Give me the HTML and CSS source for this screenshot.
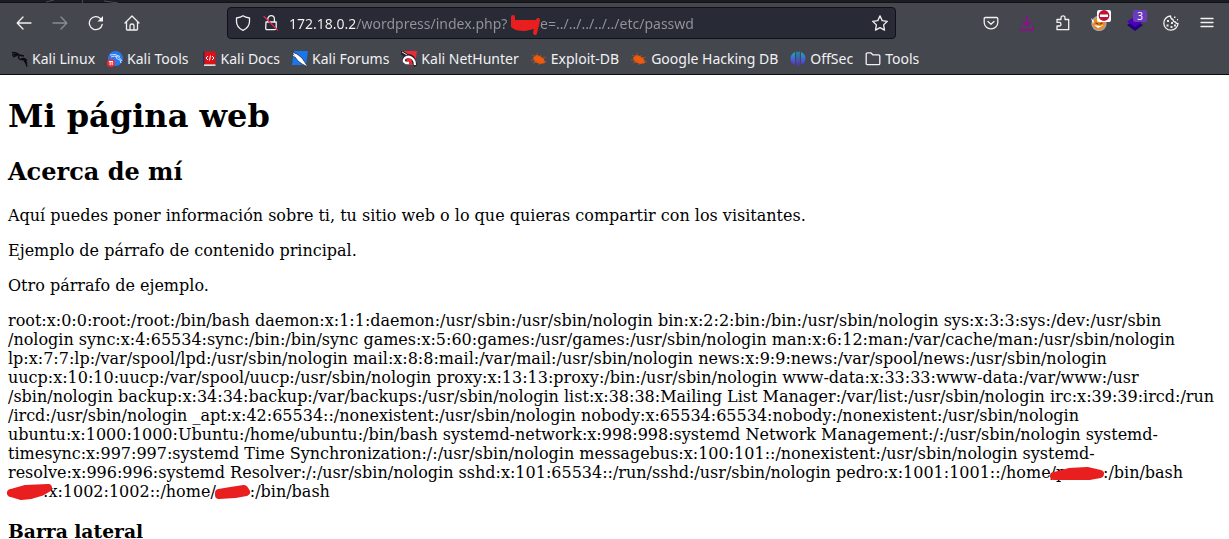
FILE: index.html
```html
<!DOCTYPE html>
<html lang="es">
<head>
<meta charset="utf-8">
<title>Mi página web</title>
<link rel="stylesheet" href="styles.css">
</head>
<body>
<header class="browser">
  <div class="tab-edge"><svg width="260" height="3" viewBox="0 0 260 3"><path d="M46 2l8-2M82.500 3V0M104 1l14 2" stroke="#4b4c53" fill="none"/></svg></div>
  <div class="toolbar">
    <nav class="buttons">
      <button class="tool" aria-label="Atrás"><svg viewBox="0 0 16 16"><path d="M15 8H1.500M7 2L1.200 8L7 14"/></svg></button>
      <button class="tool dim" aria-label="Adelante"><svg viewBox="0 0 16 16"><path d="M1 8h13.500M9 2l5.800 6L9 14"/></svg></button>
      <button class="tool" aria-label="Recargar"><svg viewBox="0 0 16 16"><path d="M14.200 9.500A6.500 6.500 0 1 1 12.500 3.600L14 5"/><path d="M15 1v5.500H9.500z" fill="#f1f1f2" stroke="none"/></svg></button>
      <button class="tool" aria-label="Inicio"><svg viewBox="0 0 16 16"><path d="M1 8l7-7 7 7M2.500 7v7.200q0 .8.800.8h9.400q.8 0 .8-.8V7M6 15v-4.500q0-1.500 2-1.500t2 1.500V15"/></svg></button>
    </nav>
    <div class="urlbar">
      <svg class="icon line" viewBox="0 0 16 16"><path d="M8 .8C6.500 2 4 2.700 1.500 3v3.500C1.500 11 4 13.500 8 15.300c4-1.800 6.500-4.300 6.500-8.800V3C12 2.700 9.500 2 8 .8z"/></svg>
      <svg class="icon line lock" viewBox="0 0 16 16"><path d="M4.800 7V4a3.300 3.300 0 0 1 6.600 0v3M3 7h10.200v6.200q0 1.500-1.500 1.500H4.200q-1.500 0-1.500-1.500z"/><path d="M1 1.500l13.500 13.500" stroke="#e22850"/></svg>
      <div class="address">
        <input class="url" aria-label="Dirección" value="172.18.0.2/wordpress/index.php?         e=../../../../../etc/passwd">
        <svg class="mark mark-url" viewBox="0 0 32 22"><path d="M3 3v9q3 3 12 3l12-3M5 8h20M5 12h22M28 6l-3 13M14 11h12" /></svg>
      </div>
      <button class="star" aria-label="Marcador"><svg class="icon line" viewBox="0 0 16 16"><path d="M8 .9l2.200 4.700 5.100.7-3.700 3.600.9 5.200L8 12.600l-4.500 2.500.9-5.200L.7 6.300l5.100-.7z"/></svg></button>
    </div>
    <nav class="buttons">
      <button class="tool" aria-label="Pocket"><svg viewBox="0 0 16 16"><path d="M2.500 2.500h11q1.300 0 1.300 1.300V7.500a6.800 6.300 0 0 1-13.600 0V3.800q0-1.300 1.300-1.300zM5 6.500l3 2.700 3-2.700"/></svg></button>
      <button class="tool download" aria-label="Descargas"><svg viewBox="0 0 16 16"><path d="M8 1v9.500M4 6.700l4 4 4-4M1.500 12v2q0 1 1 1h11q1 0 1-1v-2"/></svg></button>
      <button class="tool" aria-label="Extensiones"><svg viewBox="0 0 16 16"><path d="M2 6V4.500H6V2.800a2 2 0 0 1 4 0V4.500h3.700V14.700H2V11h2.200a1.800 1.800 0 0 0 0-3.600H2z"/></svg></button>
      <button class="tool" aria-label="FoxyProxy"><svg viewBox="0 0 16 16"><circle cx="8" cy="8.500" r="7" fill="#e88b28" stroke="#a3a9b0"/><path d="M0 3l3 3-1 3zM3 10l4 3 6-3-4 1z" fill="#fff" stroke="none"/><path d="M5 8l2 1M9 9l2-1" stroke="#764010"/></svg><span class="badge stop"><svg viewBox="0 0 14 12"><circle cx="7" cy="5.500" r="5.400" fill="#be123a" stroke="none"/><path d="M3 4.500h8v2.500H3z" fill="#fff" stroke="none"/></svg></span></button>
      <button class="tool" aria-label="Wappalyzer"><svg viewBox="0 0 16 16"><path d="M0 10l8-5 8 5-8 6z" fill="#210080" stroke="none"/><path d="M0 6.500l8-5 8 5-8 5.500z" fill="#4c00b8" stroke="none"/></svg><span class="badge count">3</span></button>
      <button class="tool" aria-label="Cookies"><svg viewBox="0 0 16 16"><path d="M7.500 1A7.100 7.100 0 1 0 15 8.500q-2 .5-2.500-1.500-2.500 0-2.500-2.500Q7.500 4 7.500 1z"/><path d="M11 1.500h1.500v1.500H11zM14 4h1v1.500h-1zM4 5h2v2H4zM8 7h2v2H8zM3.500 9.500h2v2h-2zM7.500 11h2v2h-2zM11 9.500h2v2h-2z" fill="#e6e6e8" stroke="none"/></svg></button>
      <button class="tool" aria-label="Menú"><svg viewBox="0 0 16 16"><path d="M2 3.500h12M2 7.500h12M2 11.500h12"/></svg></button>
    </nav>
  </div>
  <nav class="bookmarks">
    <a href="#"><svg class="icon" viewBox="0 0 16 16"><path d="M0 1.500l4 .5 3 1.500M0 4l5-.5 3 .8q-3 2.200 0 4l5 .7 2 3.500M1 6l4-1.500M7 4l5 1M9 8q3-1.500 6 1.500M12 10q2 1 3 5.500" fill="none" stroke="#0b0b0e" stroke-width="1.300"/></svg>Kali Linux</a>
    <a href="#"><svg class="icon" viewBox="0 0 16 16"><circle cx="8.500" cy="7.500" r="7.500" fill="#2777f2"/><path d="M3 4l5-.5 5 2M4 6q7-3 11 4M9 5q-1 3 4 4l1 3" fill="none" stroke="#c9e2ff"/><circle cx="4" cy="12" r="4" fill="#ee2f35"/><path d="M2 10.500h4M3.200 10.500V14M5.200 10.500V14" stroke="#fff"/></svg>Kali Tools</a>
    <a href="#"><svg class="icon" viewBox="0 0 16 16"><path d="M2 .5h2V14H2z" fill="#253064"/><path d="M3.500.5H14.500V13H3.500z" fill="#df1018"/><path d="M3 13.300h11.500v1.700H3z" fill="#e9d5d3"/><path d="M7 5L5 7l2 2M9.500 4.500l-1 5M11 5l2 2-2 2" fill="none" stroke="#fff"/></svg>Kali Docs</a>
    <a href="#"><svg class="icon" viewBox="0 0 16 16"><path d="M2 0h14l-2 14H0z" fill="#1976ed"/><path d="M0 1l5 2 5 4 2 3 4 6-6-3-4-3-3-4z" fill="#fff" stroke="#26344a" stroke-width=".8"/><path d="M1 4l5 3" stroke="#fff"/></svg>Kali Forums</a>
    <a href="#"><svg class="icon" viewBox="0 0 16 16"><path d="M1 0h15l-2 14H8z" fill="#ec2936"/><path d="M0 1l6 4M3 10q0-5 5-5 5 1 5 6l2 4" fill="none" stroke="#26232b" stroke-width="4"/><path d="M1 1l5 3" stroke="#ddd"/><path d="M8 12l-3 0q-4-2-1-5 4-3 8 1 2 2 2 6" fill="none" stroke="#fff" stroke-width="2.300"/></svg>Kali NetHunter</a>
    <a href="#"><svg class="icon" viewBox="0 0 16 16"><path d="M2 7l3-3 4 1 4 3 1 4-5 1-5-2z" fill="#f15a0a"/><path d="M1 4l4 2M6 2l1 4M10 4l-1 3M0 9h5M2 12l5-2M11 7l4-1M12 10l4 1M8 14l1-3" stroke="#c65618" stroke-width=".7"/></svg>Exploit-DB</a>
    <a href="#"><svg class="icon" viewBox="0 0 16 16"><path d="M2 7l3-3 4 1 4 3 1 4-5 1-5-2z" fill="#f15a0a"/><path d="M1 4l4 2M6 2l1 4M10 4l-1 3M0 9h5M2 12l5-2M11 7l4-1M12 10l4 1M8 14l1-3" stroke="#c65618" stroke-width=".7"/></svg>Google Hacking DB</a>
    <a href="#"><svg class="icon" viewBox="0 0 16 16"><defs><linearGradient id="offsec" x2="0" y2="1"><stop stop-color="#15aeca"/><stop offset="1" stop-color="#6525d8"/></linearGradient></defs><path d="M5 1v13Q.5 12 .5 7.500T5 1zM11 1v13q4.500-2 4.500-6.500T11 1zM6 .5h.6V12L6 14zM9.400 .5h.6V14l-.6-2zM7.300 1h1.400v14H7.300z" fill="url(#offsec)"/></svg>OffSec</a>
    <a href="#"><svg class="icon line" viewBox="0 0 16 16"><path d="M1.200 3q0-1.200 1.200-1.200h3.400l2 2h5.800q1.200 0 1.200 1.200v7.500q0 1.200-1.200 1.200H2.400q-1.200 0-1.200-1.200z"/></svg>Tools</a>
  </nav>
</header>
<main class="page">
  <h1>Mi página web</h1>
  <h2>Acerca de mí</h2>
  <p>Aquí puedes poner información sobre ti, tu sitio web o lo que quieras compartir con los visitantes.</p>
  <p>Ejemplo de párrafo de contenido principal.</p>
  <p>Otro párrafo de ejemplo.</p>
  <p class="listing">root:x:0:0:root:/root:/bin/bash daemon:x:1:1:daemon:/usr/sbin:/usr/sbin/nologin bin:x:2:2:bin:/bin:/usr/sbin/nologin sys:x:3:3:sys:/dev:/usr/sbin<br>/nologin sync:x:4:65534:sync:/bin:/bin/sync games:x:5:60:games:/usr/games:/usr/sbin/nologin man:x:6:12:man:/var/cache/man:/usr/sbin/nologin<br>lp:x:7:7:lp:/var/spool/lpd:/usr/sbin/nologin mail:x:8:8:mail:/var/mail:/usr/sbin/nologin news:x:9:9:news:/var/spool/news:/usr/sbin/nologin<br>uucp:x:10:10:uucp:/var/spool/uucp:/usr/sbin/nologin proxy:x:13:13:proxy:/bin:/usr/sbin/nologin www-data:x:33:33:www-data:/var/www:/usr<br>/sbin/nologin backup:x:34:34:backup:/var/backups:/usr/sbin/nologin list:x:38:38:Mailing List Manager:/var/list:/usr/sbin/nologin irc:x:39:39:ircd:/run<br>/ircd:/usr/sbin/nologin _apt:x:42:65534::/nonexistent:/usr/sbin/nologin nobody:x:65534:65534:nobody:/nonexistent:/usr/sbin/nologin<br>ubuntu:x:1000:1000:Ubuntu:/home/ubuntu:/bin/bash systemd-network:x:998:998:systemd Network Management:/:/usr/sbin/nologin systemd-<br>timesync:x:997:997:systemd Time Synchronization:/:/usr/sbin/nologin messagebus:x:100:101::/nonexistent:/usr/sbin/nologin systemd-<br>resolve:x:996:996:systemd Resolver:/:/usr/sbin/nologin sshd:x:101:65534::/run/sshd:/usr/sbin/nologin pedro:x:1001:1001::/home/<span class="hidden-name wide">p<svg class="mark mark-wide" viewBox="0 0 56 16"><path d="M5 10L20 6L38 5L51 8L40 10H5M12 9h30M22 7h18"/></svg></span>:/bin/bash<br><span class="hidden-name first"><svg class="mark mark-first" viewBox="0 0 46 16"><path d="M4 9L18 5L41 4L34 8L24 11L14 12L4 9M12 8l22-2M12 10l14-2"/></svg></span>:x:1002:1002::/home/<span class="hidden-name last"><svg class="mark mark-last" viewBox="0 0 36 16"><path d="M4 9L16 7L29 5L31 8L20 10L4 11zM12 9l16-2"/></svg></span>:/bin/bash</p>
  <h3>Barra lateral</h3>
</main>
</body>
</html>
```
FILE: styles.css
```css
* { box-sizing: border-box; }
html, body { height: 100%; }
body {
  margin: 0;
  display: flex;
  flex-direction: column;
  overflow: hidden;
  background: #fff;
  color: #000;
  font-family: "DejaVu Serif", serif;
  font-size: 16px;
}
.browser {
  flex: none;
  background: #44474e;
  border-bottom: 1px solid #0c0c0f;
  color: #f1f1f2;
  font-family: "Noto Sans", sans-serif;
  font-size: 14px;
}
.tab-edge { height: 3px; background: #1b1c21; border-bottom: 1px solid #131317; }
.tab-edge svg { display: block; }
.toolbar { display: flex; align-items: center; height: 40px; padding: 0 6px 0 8px; }
.buttons { display: flex; gap: 4px; }
button { border: 0; padding: 0; background: none; color: inherit; font: inherit; }
.tool {
  position: relative;
  display: flex;
  align-items: center;
  justify-content: center;
  width: 32px;
  height: 32px;
}
.tool > svg, .icon { width: 16px; height: 16px; flex: none; display: block; }
.tool > svg, .line { fill: none; stroke: #f1f1f2; stroke-width: 1.3; stroke-linecap: round; stroke-linejoin: round; }
.dim > svg { stroke: #8b8d92; }
.download > svg { stroke: #a3009f; }
.badge { position: absolute; right: 4px; top: 3px; width: 14px; height: 12px; border-radius: 2px; }
.badge svg { display: block; width: 14px; height: 12px; }
.stop { background: #fff; }
.count { background: #6a3bbd; font-size: 10px; line-height: 12px; text-align: center; color: #fff; }
.urlbar {
  flex: 1;
  min-width: 0;
  display: flex;
  align-items: center;
  height: 32px;
  margin: 0 79px;
  padding: 0 7px;
  border: 1px solid #101116;
  border-radius: 4px;
  background: #282a36;
}
.lock { margin-left: 12px; }
.address { position: relative; flex: 1; min-width: 0; margin-left: 10px; }
.url {
  display: block;
  width: 100%;
  border: 0;
  padding: 0;
  outline: 0;
  font: inherit;
  color: transparent;
  background: linear-gradient(90deg, #f8f8f2 66px, #94959b 66px);
  -webkit-background-clip: text;
  background-clip: text;
}
.bookmarks { display: flex; align-items: center; gap: 12px; height: 31px; padding: 0 12px; white-space: nowrap; }
.bookmarks a { display: flex; align-items: center; gap: 4px; color: inherit; text-decoration: none; }
.page { padding: 0 8px; }
.page h1 { margin: 22px 0; }
.listing { white-space: nowrap; }
.mark { position: absolute; fill: #e91f1f; stroke: #e91f1f; stroke-width: 8; stroke-linecap: round; stroke-linejoin: round; }
.mark-url { left: 221px; top: 0; width: 32px; height: 22px; stroke-width: 4; fill: none; }
.hidden-name { position: relative; display: inline-block; }
.wide { width: 47px; }
.first { width: 35px; }
.last { width: 34px; }
.mark-wide { left: -7px; top: 3px; width: 56px; height: 16px; }
.mark-first { left: -1px; bottom: -3px; width: 46px; height: 16px; }
.mark-last { left: -1px; bottom: -3px; width: 36px; height: 16px; }
```
